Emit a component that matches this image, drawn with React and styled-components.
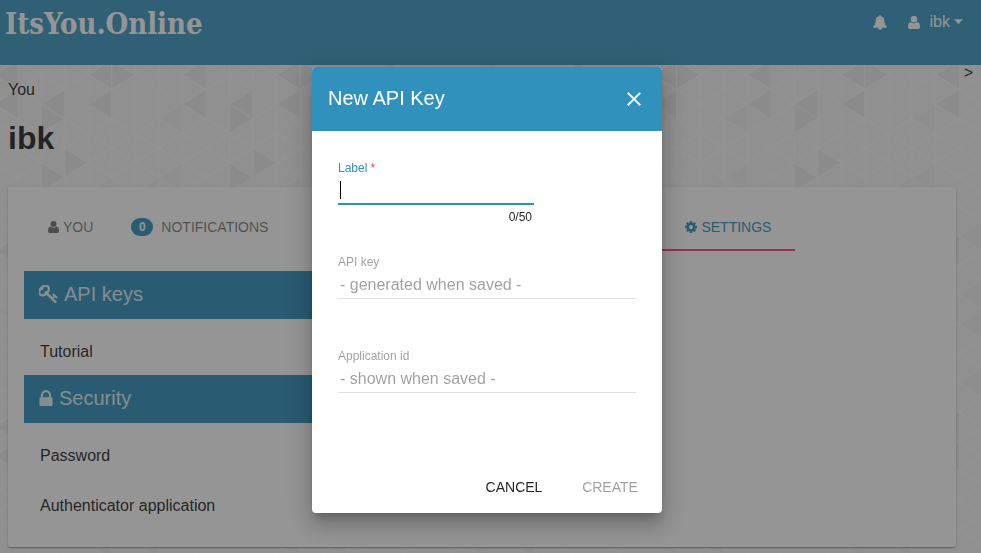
import React from "react";
import styled, { createGlobalStyle, css } from "styled-components";

const BLUE = "#3091bc";

const GlobalStyle = createGlobalStyle`
  *, *::before, *::after { box-sizing: border-box; }
  body {
    margin: 0;
    background: #f6f6f6;
    color: rgba(0, 0, 0, 0.87);
    font-family: "Liberation Sans", Arial, sans-serif;
    font-size: 16px;
    line-height: 16px;
  }
  button, input { font-family: inherit; }
`;

/* ---------- page ---------- */

const Page = styled.div`
  position: relative;
  min-height: 100vh;
  isolation: isolate;
  overflow: hidden;
`;

const Backdrop = styled.svg`
  position: absolute;
  inset: 0;
  width: 100%;
  height: 100%;
  z-index: -1;
`;

const Header = styled.header`
  display: flex;
  justify-content: space-between;
  align-items: flex-start;
  height: 65px;
  padding: 4px 18px 0 5px;
  background: #3e9ac1;
  color: #fff;
`;

const Logo = styled.a`
  font-family: "DejaVu Serif Condensed", "DejaVu Serif", serif;
  font-weight: 700;
  font-size: 29px;
  line-height: 40px;
  color: #fff;
  text-decoration: none;
`;

const HeaderMenu = styled.nav`
  display: flex;
  align-items: center;
  gap: 21px;
  height: 36px;
`;

const MenuButton = styled.button`
  display: flex;
  align-items: center;
  padding: 0;
  border: 0;
  background: none;
  color: inherit;
  font-size: 16px;
  line-height: 20px;
`;

const UserName = styled.span`
  margin: 0 4px 0 10px;
`;

const Main = styled.main`
  padding: 0 8px 6px;
`;

const Expand = styled.button`
  display: block;
  margin-left: auto;
  padding: 0;
  border: 0;
  background: none;
  color: inherit;
  font-size: 16px;
  line-height: 16px;
`;

const Crumb = styled.div`
  line-height: 18px;
`;

const Title = styled.h1`
  margin: 19px 0 29px;
  font-size: 32px;
  line-height: 40px;
`;

const Card = styled.section`
  margin-right: 17px;
  padding: 16px 16px 18px;
  border-radius: 2px;
  background: #fff;
  box-shadow: 0 1px 3px rgba(0, 0, 0, 0.2), 0 1px 1px rgba(0, 0, 0, 0.14),
    0 2px 1px -1px rgba(0, 0, 0, 0.12);
`;

const Tabs = styled.div`
  display: flex;
  height: 48px;
  margin-bottom: 20px;
`;

const Tab = styled.button`
  display: flex;
  align-items: center;
  gap: ${(p) => p.$gap || 4}px;
  height: 48px;
  padding: 0 14px 0 24px;
  border: 0;
  background: none;
  color: rgba(0, 0, 0, 0.54);
  font-size: 14px;
  line-height: 20px;
  text-transform: uppercase;
  ${(p) =>
    p.$active &&
    css`
      padding: 2px 24px 0;
      margin-left: 379px;
      color: ${BLUE};
      border-bottom: 2px solid #ff4081;
    `}
`;

const Badge = styled.span`
  width: 22px;
  border-radius: 9px;
  background: ${BLUE};
  color: #fff;
  font-size: 12px;
  font-weight: 700;
  line-height: 18px;
  text-align: center;
`;

const Sections = styled.div`
  width: 33%;
  min-width: 240px;
`;

const Band = styled.h2`
  display: flex;
  align-items: center;
  gap: 6px;
  height: 48px;
  margin: 0;
  padding: 0 15px 2px;
  background: ${BLUE};
  color: rgba(255, 255, 255, 0.87);
  font-size: 20px;
  font-weight: 400;
  line-height: 24px;
`;

const List = styled.ul`
  display: grid;
  gap: 2px;
  margin: 0;
  padding: 8px 0 0;
  list-style: none;
`;

const Item = styled.li`
  display: flex;
  align-items: center;
  height: 48px;
  padding: 1px 16px 0;
`;

const Glyph = styled.svg`
  display: block;
  flex: none;
  fill: currentColor;
`;

/* ---------- dialog ---------- */

const Overlay = styled.div`
  position: fixed;
  inset: 0;
  display: flex;
  justify-content: center;
  align-items: flex-start;
  padding: 67px 7px 0 0;
  background: rgba(33, 33, 33, 0.48);
`;

const Dialog = styled.form`
  width: 350px;
  max-width: 90%;
  border-radius: 4px;
  overflow: hidden;
  background: #fff;
  box-shadow: 0 7px 8px -4px rgba(0, 0, 0, 0.2),
    0 13px 19px 2px rgba(0, 0, 0, 0.14), 0 5px 24px 4px rgba(0, 0, 0, 0.12);
`;

const DialogBar = styled.div`
  display: flex;
  align-items: center;
  justify-content: space-between;
  height: 64px;
  padding: 0 16px 2px;
  background: ${BLUE};
  color: #fff;
`;

const DialogTitle = styled.h2`
  margin: 0;
  font-size: 20px;
  font-weight: 400;
  line-height: 24px;
`;

const CloseButton = styled.button`
  padding: 2px 0 0;
  border: 0;
  background: none;
  color: rgba(255, 255, 255, 0.87);
`;

const Fields = styled.div`
  padding: 29px 26px 19px;
`;

const Field = styled.div`
  width: ${(p) => (p.$short ? "196px" : "auto")};
  height: 94px;
`;

const FieldLabel = styled.label`
  display: block;
  color: ${(p) => (p.$focused ? BLUE : "rgba(0, 0, 0, 0.38)")};
  font-size: 12px;
  line-height: 16px;
`;

const Required = styled.span`
  margin-left: 3px;
  color: #f44336;
`;

const TextInput = styled.input`
  display: block;
  width: 100%;
  height: 29px;
  padding: 1px 2px 0;
  border: 0;
  border-bottom: 1px solid rgba(0, 0, 0, 0.12);
  border-radius: 0;
  outline: 0;
  background: none;
  color: rgba(0, 0, 0, 0.87);
  font-size: 16px;
  &:disabled { color: rgba(0, 0, 0, 0.38); }
  ${(p) =>
    p.$focused &&
    css`
      border-bottom: 2px solid ${BLUE};
      caret-color: transparent;
      background: linear-gradient(#000, #000) 2px 5px / 1px 18px no-repeat;
    `}
`;

const Counter = styled.div`
  padding: 4px 2px 0;
  text-align: right;
  font-size: 12px;
  line-height: 16px;
`;

const Actions = styled.div`
  display: flex;
  justify-content: flex-end;
  gap: 8px;
  padding: 8px;
`;

const ActionButton = styled.button`
  min-width: 88px;
  height: 36px;
  padding: 0 6px;
  border: 0;
  background: none;
  color: rgba(0, 0, 0, 0.87);
  font-size: 14px;
  text-transform: uppercase;
  &:disabled { color: rgba(0, 0, 0, 0.38); }
`;

/* ---------- icons ---------- */

const icons = {
  user: {
    box: "0 0 12 13",
    d: "M6 0a3.3 3.3 0 0 1 0 6.6A3.3 3.3 0 0 1 6 0zM2.9 6C.9 6.2 0 8 0 10.8 0 12.2.8 13 2 13h8c1.200 0 2-.8 2-2.200C12 8 11.100 6.200 9.100 6 7.500 7.700 4.500 7.700 2.900 6z",
  },
  bell: {
    box: "64 0 1664 1792",
    d: "M912 1696q0-16-16-16-59 0-101.5-42.5t-42.5-101.5q0-16-16-16t-16 16q0 73 51.5 124.5t124.5 51.5q16 0 16-16zm816-288q0 52-38 90t-90 38h-448q0 106-75 181t-181 75-181-75-75-181h-448q-52 0-90-38t-38-90q50-42 91-88t85-119.5 74.5-158.5 50-206 19.5-260q0-152 117-282.5t307-158.5q-8-19-8-39 0-40 28-68t68-28 68 28 28 68q0 20-8 39 190 28 307 158.5t117 282.5q0 139 19.5 260t50 206 74.5 158.5 85 119.5 91 88z",
  },
  caret: { box: "0 0 10 6", d: "M0 0h10L5 5.5z" },
  cog: {
    box: "128 128 1536 1536",
    d: "M1152 896q0-106-75-181t-181-75-181 75-75 181 75 181 181 75 181-75 75-181zm512-109v222q0 12-8 23t-20 13l-185 28q-19 54-39 91 35 50 107 138 10 12 10 25t-9 23q-27 37-99 108t-94 71q-12 0-26-9l-138-108q-44 23-91 38-16 136-29 186-7 28-36 28h-222q-14 0-24.5-8.5t-11.5-21.5l-28-184q-49-16-90-37l-141 107q-10 9-25 9-14 0-25-11-126-114-165-168-7-10-7-23 0-12 8-23 15-21 51-66.5t54-70.5q-27-50-41-99l-183-27q-13-2-21-12.5t-8-23.5v-222q0-12 8-23t19-13l186-28q14-46 39-92-40-57-107-138-10-12-10-24 0-10 9-23 26-36 98.5-107.5t94.5-71.5q13 0 26 10l138 107q44-23 91-38 16-136 29-186 7-28 36-28h222q14 0 24.5 8.5t11.5 21.5l28 184q49 16 90 37l142-107q9-9 24-9 13 0 25 10 129 119 165 170 7 8 7 22 0 12-8 23-15 21-51 66.5t-54 70.5q26 50 41 98l183 28q13 2 21 12.5t8 23.5z",
  },
  key: {
    box: "96 160 1600 1632",
    d: "M832 512q0-80-56-136t-136-56-136 56-56 136q0 42 19 83-41-19-83-19-80 0-136 56t-56 136 56 136 136 56 136-56 56-136q0-42-19-83 41 19 83 19 80 0 136-56t56-136zm851 704q0 17-49 66t-66 49q-9 0-28.5-16t-36.5-33-38.5-40-24.5-26l-96 96 220 220q28 28 28 68 0 42-39 81t-81 39q-40 0-68-28l-671-671q-176 131-365 131-163 0-265.5-102.5t-102.5-265.5q0-160 95-313t248-248 313-95q163 0 265.5 102.5t102.5 265.5q0 189-131 365l355 355 96-96q-3-3-26-24.5t-40-38.5-33-36.5-16-28.5q0-17 49-66t66-49q13 0 23 10 6 6 46 44.5t82 79.5 86.5 86 73 78 28.5 41z",
  },
  lock: {
    box: "320 128 1152 1408",
    d: "M640 768h512v-192q0-106-75-181t-181-75-181 75-75 181v192zm832 96v576q0 40-28 68t-68 28h-960q-40 0-68-28t-28-68v-576q0-40 28-68t68-28h32v-192q0-184 132-316t316-132 316 132 132 316v192h32q40 0 68 28t28 68z",
  },
  close: {
    box: "0 0 24 24",
    d: "M19 6.41L17.59 5 12 10.59 6.41 5 5 6.41 10.59 12 5 17.59 6.41 19 12 13.41 17.59 19 19 17.59 13.41 12z",
  },
};

function Icon({ name, width, height }) {
  return (
    <Glyph viewBox={icons[name].box} width={width} height={height} aria-hidden="true">
      <path d={icons[name].d} />
    </Glyph>
  );
}

/* Triangle mesh: 8 columns by 24 half-steps, shaded cells as [column, row, direction, faint]. */
const COL = 23.53;
const HALF = 14.667;
const SHADED = [
  [3, 1, "l"], [4, 1, "r"], [7, 1, "l"], [1, 3, "l"], [3, 3, "l"], [7, 3, "l"],
  [1, 4, "r"], [6, 4, "l", 1], [2, 7, "r"], [1, 8, "r"], [3, 9, "l", 1],
  [5, 9, "l", 1], [6, 8, "l", 1], [7, 13, "l"], [7, 17, "l", 1], [0, 12, "l", 1],
  [0, 18, "l", 1], [0, 16, "l", 1], [0, 22, "l", 1],
];

const cell = (c, j, dir) => {
  const tip = dir === "l" ? c : c + 1;
  const edge = dir === "l" ? c + 1 : c;
  return [[tip, j], [edge, j - 1], [edge, j + 1]]
    .map(([x, y]) => `${x * COL},${y * HALF}`)
    .join(" ");
};

const meshLines = [];
for (let c = 0; c < 8; c += 1) {
  meshLines.push(`M${c * COL} 0V${24 * HALF}`);
  for (let j = c % 2; j <= 24; j += 2) {
    meshLines.push(`M${c * COL} ${j * HALF}l${COL} ${HALF}M${c * COL} ${j * HALF}l${COL} ${-HALF}`);
  }
}

function TriangleBackdrop() {
  return (
    <Backdrop aria-hidden="true">
      <defs>
        <pattern id="mesh" x="17.67" y="60" width={8 * COL} height={24 * HALF} patternUnits="userSpaceOnUse">
          {SHADED.map(([c, j, dir, faint]) => (
            <polygon key={`${c}-${j}-${dir}`} points={cell(c, j, dir)} fill={faint ? "#f2f2f2" : "#ececec"} />
          ))}
          <path d={meshLines.join("")} fill="none" stroke="#fbfbfb" strokeWidth="1" />
        </pattern>
      </defs>
      <rect width="100%" height="100%" fill="#f6f6f6" />
      <rect width="100%" height="100%" fill="url(#mesh)" />
    </Backdrop>
  );
}

export default function App() {
  return (
    <>
      <GlobalStyle />
      <Page>
        <TriangleBackdrop />
        <Header>
          <Logo href="#">ItsYou.Online</Logo>
          <HeaderMenu>
            <MenuButton type="button" aria-label="Notifications">
              <Icon name="bell" width={14} height={15} />
            </MenuButton>
            <MenuButton type="button">
              <Icon name="user" width={12} height={13} />
              <UserName>ibk</UserName>
              <Icon name="caret" width={9} height={6} />
            </MenuButton>
          </HeaderMenu>
        </Header>
        <Main>
          <Expand type="button">&gt;</Expand>
          <Crumb>You</Crumb>
          <Title>ibk</Title>
          <Card>
            <Tabs role="tablist">
              <Tab type="button" role="tab">
                <Icon name="user" width={11} height={12} />
                You
              </Tab>
              <Tab type="button" role="tab" $gap={8}>
                <Badge>0</Badge>
                Notifications
              </Tab>
              <Tab type="button" role="tab" aria-selected="true" $active>
                <Icon name="cog" width={12} height={12} />
                Settings
              </Tab>
            </Tabs>
            <Sections>
              <Band>
                <Icon name="key" width={19} height={19} />
                API keys
              </Band>
              <List>
                <Item>Tutorial</Item>
              </List>
              <Band>
                <Icon name="lock" width={14} height={16} />
                Security
              </Band>
              <List>
                <Item>Password</Item>
                <Item>Authenticator application</Item>
              </List>
            </Sections>
          </Card>
        </Main>
      </Page>
      <Overlay>
        <Dialog role="dialog" aria-modal="true" aria-labelledby="dialog-title">
          <DialogBar>
            <DialogTitle id="dialog-title">New API Key</DialogTitle>
            <CloseButton type="button" aria-label="Close">
              <Icon name="close" width={24} height={24} />
            </CloseButton>
          </DialogBar>
          <Fields>
            <Field $short>
              <FieldLabel htmlFor="label" $focused>
                Label<Required>*</Required>
              </FieldLabel>
              <TextInput id="label" type="text" maxLength={50} required autoFocus $focused />
              <Counter>0/50</Counter>
            </Field>
            <Field>
              <FieldLabel htmlFor="api-key">API key</FieldLabel>
              <TextInput id="api-key" type="text" defaultValue="- generated when saved -" disabled />
            </Field>
            <Field>
              <FieldLabel htmlFor="app-id">Application id</FieldLabel>
              <TextInput id="app-id" type="text" defaultValue="- shown when saved -" disabled />
            </Field>
          </Fields>
          <Actions>
            <ActionButton type="button">Cancel</ActionButton>
            <ActionButton type="submit" disabled>Create</ActionButton>
          </Actions>
        </Dialog>
      </Overlay>
    </>
  );
}
